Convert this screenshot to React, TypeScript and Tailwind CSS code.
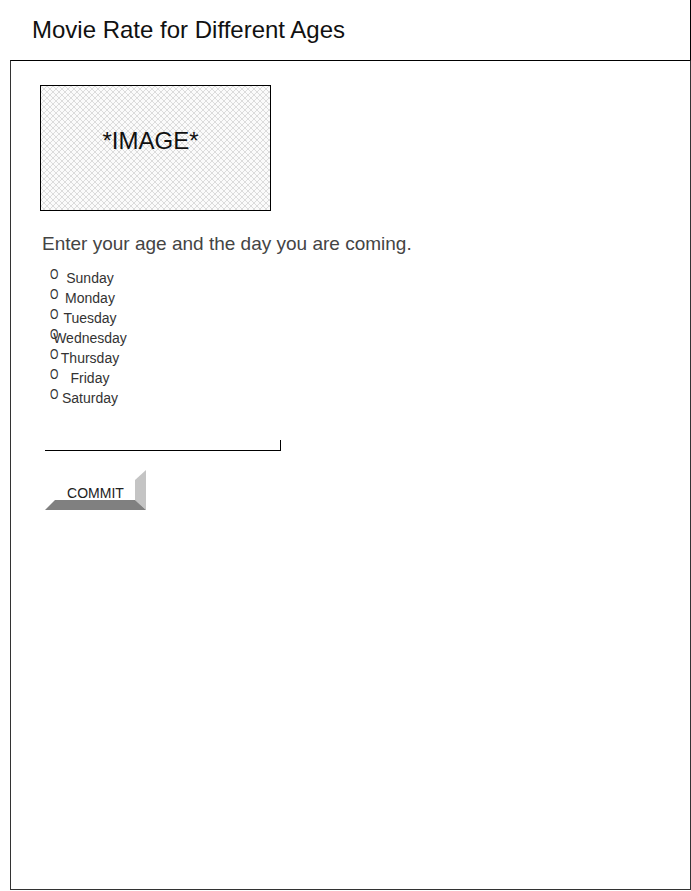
import React from 'react';

const days = ['Sunday', 'Monday', 'Tuesday', 'Wednesday', 'Thursday', 'Friday', 'Saturday'];

export default function App() {
  return (
    <div className="w-[691px] h-[891px] bg-white font-['Liberation_Sans',Arial,sans-serif] text-[#222]">
      <div className="ml-[10px] h-[60px] border-r border-black flex items-center pl-[22px]">
        <h1 className="text-[24px] leading-none text-[#111]">Movie Rate for Different Ages</h1>
      </div>
      <div className="ml-[10px] h-[830px] border border-[#333] border-t-black pt-[24px] pl-[29px]">
        <div className="relative w-[231px] h-[126px] border border-black bg-[#fbfbfb] flex items-center justify-center pr-[10px] pb-[14px]">
          <svg className="absolute inset-0" width="100%" height="100%">
            <defs>
              <pattern id="hatch" width="6" height="6" patternUnits="userSpaceOnUse">
                <path d="M0,0 L6,6 M6,0 L0,6" stroke="#dcdcdc" strokeWidth="1" />
              </pattern>
            </defs>
            <rect width="100%" height="100%" fill="url(#hatch)" />
          </svg>
          <span className="relative text-[24px] text-[#111]">*IMAGE*</span>
        </div>

        <p className="mt-[20px] ml-[2px] text-[19px] leading-[26px] text-[#444]">Enter your age and the day you are coming.</p>

        <div className="mt-[10px] ml-[10px] flex flex-col">
          {days.map((d) => (
            <label key={d} className="relative w-[80px] h-[20px] flex items-center justify-center text-[14px] text-[#333]">
              <span className="absolute left-0 top-[-3px] origin-left scale-x-[0.72] text-[15px] leading-[20px] text-[#333]">O</span>
              <span className="mt-[2px]">{d}</span>
            </label>
          ))}
        </div>

        <div className="mt-[33px] ml-[5px] w-[236px] h-[11px] border-b border-r border-black" />

        <button className="relative mt-[19px] ml-[5px] w-[101px] h-[40px] text-[14px] text-[#222]">
          <svg className="absolute inset-0" width="101" height="40" viewBox="0 0 101 40">
            <polygon points="90,10 101,0 101,40 90,30" fill="#c4c4c4" />
            <polygon points="0,40 10,30 90,30 101,40" fill="#808080" />
          </svg>
          <span className="relative block pt-[6px]">COMMIT</span>
        </button>
      </div>
    </div>
  );
}
